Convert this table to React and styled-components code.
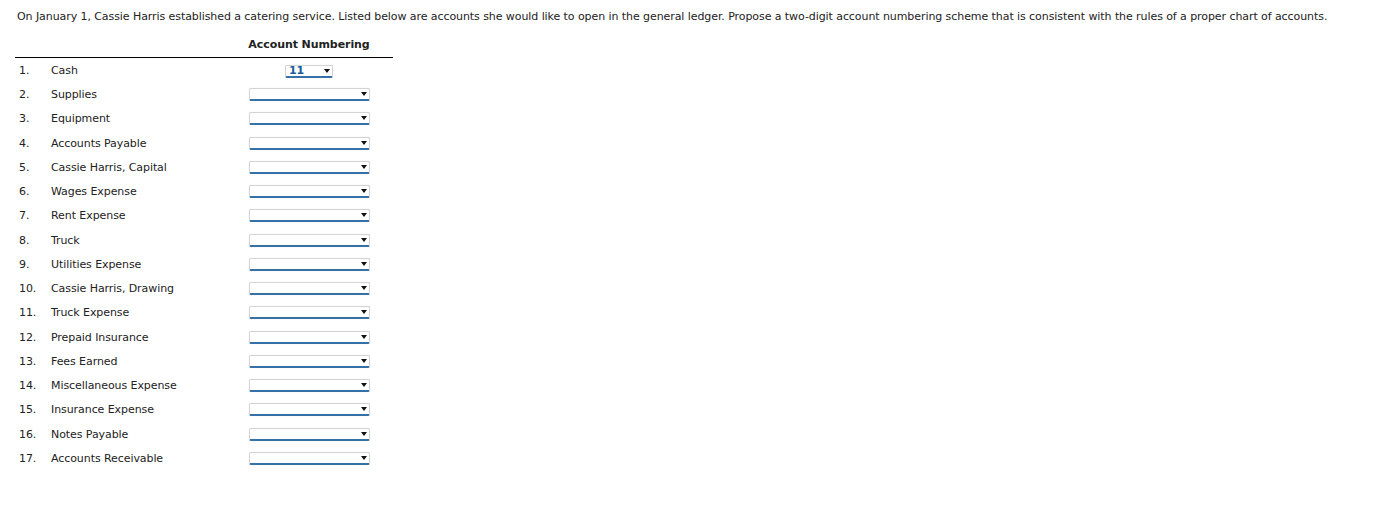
import React from 'react';
import styled, { createGlobalStyle } from 'styled-components';

const GlobalStyle = createGlobalStyle`
  body {
    margin: 0;
    background: #ffffff;
    font-family: "DejaVu Sans", Verdana, sans-serif;
    font-size: 11px;
    letter-spacing: -0.075px;
    color: #222;
  }
`;

const Page = styled.div`
  padding: 9px 17px;
`;

const Intro = styled.p`
  margin: 0 0 8px 0;
  line-height: 15px;
`;

const Table = styled.table`
  margin-left: -2px;
  border-collapse: collapse;
  width: 378px;
`;

const HeadCell = styled.th`
  font-weight: bold;
  text-align: center;
  height: 25px;
  padding: 0;
  border-bottom: 1px solid #000;
  vertical-align: middle;
`;

// rows alternate 24/25px so the list keeps the 24.25px rhythm of the original
const Row = styled.tr`
  height: ${p => (p.$tall ? '25px' : '24px')};
`;

const NumCell = styled.td`
  width: 32px;
  padding: 2px 0 0 4px;
  vertical-align: middle;
`;

const NameCell = styled.td`
  width: 174px;
  padding: 2px 0 0 0;
  vertical-align: middle;
`;

const PickCell = styled.td`
  text-align: center;
  padding: 2px 0 0 0;
  vertical-align: middle;
`;

const Dropdown = styled.span`
  display: inline-flex;
  align-items: center;
  justify-content: space-between;
  box-sizing: border-box;
  width: ${p => (p.$filled ? '48px' : '121px')};
  height: 13px;
  border: 1px solid #d4d4d4;
  border-bottom: 2px solid #3570a6;
  border-radius: 2px;
  box-shadow: 0 0 1px rgba(0, 0, 0, 0.15);
  padding: 0 2px 0 3px;
  background: #fff;
  vertical-align: middle;
`;

const Value = styled.span`
  color: #1b5a98;
  font-weight: bold;
  font-size: 11px;
  line-height: 10px;
`;

const Arrow = styled.span`
  width: 0;
  height: 0;
  border-left: 3px solid transparent;
  border-right: 3px solid transparent;
  border-top: 4px solid #111;
`;

const accounts = [
  'Cash',
  'Supplies',
  'Equipment',
  'Accounts Payable',
  'Cassie Harris, Capital',
  'Wages Expense',
  'Rent Expense',
  'Truck',
  'Utilities Expense',
  'Cassie Harris, Drawing',
  'Truck Expense',
  'Prepaid Insurance',
  'Fees Earned',
  'Miscellaneous Expense',
  'Insurance Expense',
  'Notes Payable',
  'Accounts Receivable',
];

const App = () => (
  <Page>
    <GlobalStyle />
    <Intro>
      On January 1, Cassie Harris established a catering service. Listed below are accounts she would like to open in the general ledger. Propose a two-digit account numbering scheme that is consistent with the rules of a proper chart of accounts.
    </Intro>
    <Table>
      <thead>
        <tr>
          <HeadCell />
          <HeadCell />
          <HeadCell>Account Numbering</HeadCell>
        </tr>
      </thead>
      <tbody>
        {accounts.map((name, i) => (
          <Row key={name} $tall={i % 4 === 3}>
            <NumCell>{i + 1}.</NumCell>
            <NameCell>{name}</NameCell>
            <PickCell>
              <Dropdown $filled={i === 0}>
                {i === 0 ? <Value>11</Value> : <span />}
                <Arrow />
              </Dropdown>
            </PickCell>
          </Row>
        ))}
      </tbody>
    </Table>
  </Page>
);

export default App;
